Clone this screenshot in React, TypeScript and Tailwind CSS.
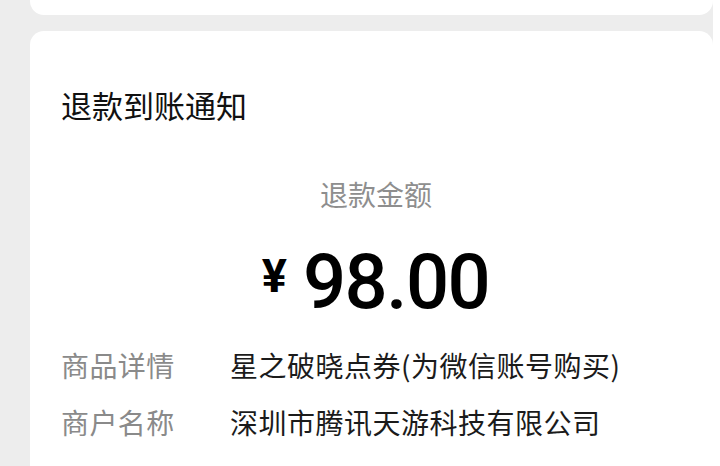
import { FC } from 'react'

const cjk = "font-['Noto_Sans_CJK_SC','Noto_Sans',sans-serif]"

const rows = [
    { label: '商品详情', value: '星之破晓点券(为微信账号购买)' },
    { label: '商户名称', value: '深圳市腾讯天游科技有限公司' },
]

const DetailRow: FC<{ label: string; value: string }> = ({ label, value }) => (
    <div className="flex h-[57px] items-center">
        <span className="w-[169px] shrink-0 text-[28px] tracking-[0.4px] text-[#8a8a8a]">{label}</span>
        <span className="text-[28px] tracking-[0.5px] text-[#1b1b1b] whitespace-nowrap">{value}</span>
    </div>
)

export default function App() {
    return (
        <div className={`flex h-[466px] w-[720px] overflow-hidden bg-white ${cjk}`}>
            <div className="flex w-[713px] shrink-0 flex-col gap-[16px] bg-[#ededed] pl-[30px]">
                {/* previous card, only its bottom edge is on screen */}
                <div className="-mt-[20px] h-[35px] shrink-0 rounded-[14px] bg-white"></div>

                <div className="flex-1 rounded-t-[14px] bg-white px-[31px]">
                    <div className="mt-[53px] h-[42px] text-[31px] leading-[42px] text-[#111]">
                        退款到账通知
                    </div>

                    <div className="mt-[48px] flex h-[40px] items-center justify-center pl-[9px] text-[28px] text-[#8e8e8e]">
                        退款金额
                    </div>

                    <div className="mt-[30px] flex h-[76px] items-center justify-center pl-[8px] font-['Roboto',sans-serif] text-black">
                        <span className="mr-[16px] -translate-y-[7px] text-[47px] font-bold leading-none">¥</span>
                        <span className="text-[76px] font-medium leading-none tracking-[-1.5px]">98.00</span>
                    </div>

                    <div className="mt-[16px]">
                        {rows.map((row) => (
                            <DetailRow key={row.label} label={row.label} value={row.value} />
                        ))}
                    </div>
                </div>
            </div>
            <div className="flex-1 bg-white"></div>
        </div>
    )
}
